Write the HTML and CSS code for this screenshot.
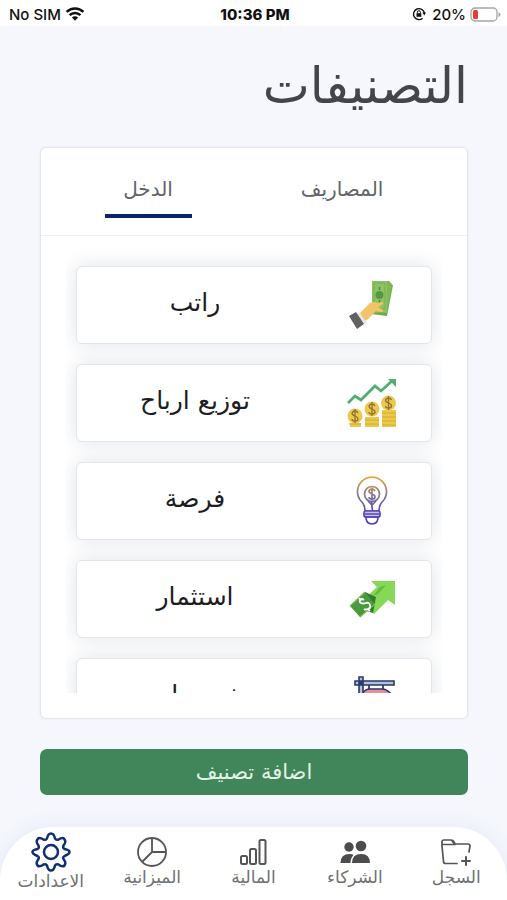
FILE: index.html
```html
<!DOCTYPE html>
<html lang="ar" dir="rtl">
<head>
<meta charset="utf-8">
<meta name="viewport" content="width=device-width, initial-scale=1">
<title>التصنيفات</title>
<link rel="stylesheet" href="styles.css">
</head>
<body>
<header class="status" dir="ltr">
  <div class="status-side">
    <span>No SIM</span>
    <svg width="20" height="16" viewBox="0 0 20 16" fill="none" stroke="#111" stroke-width="2.6"><path d="M1.6 5.9a12 12 0 0 1 16.8 0M4.6 9.2a7.6 7.6 0 0 1 10.8 0"/><path d="M6.9 11.6a4.4 4.4 0 0 1 6.2 0L10 14.8z" fill="#111" stroke="none"/></svg>
  </div>
  <strong class="status-time">10:36 PM</strong>
  <div class="status-side status-end">
    <svg width="14" height="14" viewBox="0 0 14 14" fill="none" stroke="#111" stroke-width="1.4"><path d="M10.6 11.3A5.5 5.5 0 1 1 12.4 6"/><path d="M10.4 5.6h3.6l-1.7 3z" fill="#111" stroke="none"/><path d="M5.4 6.5V5.2a1.5 1.5 0 0 1 3 0v1.3" stroke-width="1"/><path d="M4.5 6.2h4.8v3.6H4.5z" fill="#111" stroke="none"/></svg>
    <span class="percent">20%</span>
    <svg width="31" height="15" viewBox="0 0 31 15"><rect x="1" y="1" width="26" height="13" rx="4" fill="#fff" stroke="#a5a5a5" stroke-width="1.3"/><rect x="3" y="3" width="5" height="9" rx="1.5" fill="#eb3b30"/><path d="M28.5 5v5q2-1 2-2.500t-2-2.500z" fill="#a5a5a5"/></svg>
  </div>
</header>

<main class="content">
  <h1 class="title">التصنيفات</h1>

  <section class="card">
    <div class="tabs" role="tablist">
      <button class="tab" type="button" role="tab" aria-selected="false">المصاريف</button>
      <button class="tab active" type="button" role="tab" aria-selected="true">الدخل</button>
    </div>
    <ul class="list">
      <li class="item">
        <svg class="item-icon" width="50" height="50" viewBox="0 0 50 50">
          <path d="M31 2l15 3-6 31-16-2z" fill="#6faa4a"/><path d="M25 1h17l3 3-5 29H25z" fill="#80b858"/><path d="M25 1h15v31H25z" fill="#8bc463"/>
          <path d="M27 3h11v26H27z" fill="none" stroke="#75ae50"/><circle cx="32.500" cy="15" r="4" fill="#5a9546"/><path d="M32.500 7v3m0 10v3" stroke="#4f873f" stroke-width="1.500"/>
          <path d="M13 33l10-10q3-2 7 0l5-1q2 0 1 2l-5 3 5 3q1 2-2 2l-5-1-9 9-3 1z" fill="#f2c367"/>
          <path d="M10 34l2-2 8 11-3 1z" fill="#e6e6e4"/><path d="M2 36l7-4 8 12-7 5z" fill="#616161"/>
        </svg>
        <span class="item-name">راتب</span>
      </li>
      <li class="item">
        <svg class="item-icon" width="50" height="50" viewBox="0 0 50 50">
          <path d="M1 25l7-7 6 4L28 8l6 5 11-10" fill="none" stroke="#4fae70" stroke-width="2.800"/><path d="M41 1h8v8z" fill="#4fae70"/>
          <g fill="#edc949"><path d="M3 45h11v4H3zM18 39h14v10H18zM35 32h14v17H35z"/><circle cx="8" cy="38" r="7.500"/><circle cx="25" cy="31" r="7.500"/><circle cx="41.500" cy="25" r="7.500"/></g>
          <path d="M2 46h12M18 42h14M18 46h14M35 35h14M35 39h14M35 43h14M35 47h14" stroke="#d7aa32" fill="none"/>
          <path id="coin-sign" d="M11 35q-1-2-3-2t-3 2q0 2 3 3t3 3q0 2-3 2t-3-2M8 31v14" fill="none" stroke="#917039" stroke-width="1.300"/>
          <use href="#coin-sign" x="17" y="-7"/><use href="#coin-sign" x="33.500" y="-13"/>
        </svg>
        <span class="item-name">توزيع ارباح</span>
      </li>
      <li class="item">
        <svg class="item-icon" width="50" height="50" viewBox="0 0 50 50">
          <defs><linearGradient id="bulb" gradientUnits="userSpaceOnUse" x1="0" y1="1" x2="0" y2="48"><stop stop-color="#eda63c"/><stop offset=".4" stop-color="#83758f"/><stop offset=".75" stop-color="#5549bd"/><stop offset="1" stop-color="#463acb"/></linearGradient></defs>
          <g fill="none" stroke="url(#bulb)" stroke-width="1.700"><path d="M18 35q0-6-4-10a14.500 14.500 0 1 1 22 0q-4 4-4 10z"/><circle cx="25" cy="18" r="7.500"/><path d="M24.500 26l1 9M21 25l4 4 4-4"/><path d="M28 15q-1-2-3-2t-3 2q0 2 3 3t3 3q0 2-3 2t-3-2M25 11.500v13"/><rect x="17" y="35" width="16" height="6" rx="2" fill="#c9c4ed"/><path d="M18 38h14M19 41q0 7 6 7t6-7z"/></g>
        </svg>
        <span class="item-name">فرصة</span>
      </li>
      <li class="item">
        <svg class="item-icon" width="50" height="50" viewBox="0 0 50 50">
          <path d="M24 7h24v24l-7-5-14 14-12-13 15-14z" fill="#86d957"/><path d="M39 11l-8 9-5 2 7-9z" fill="#65bb40"/>
          <path d="M18 18l11 5-3 16-6-2z" fill="#317c2a"/><path d="M3 32l15-14 10 12-15 13z" fill="#4a993b"/><path d="M3 32l15-14M13 43l15-13" stroke="#76bd57" stroke-width="1.200"/>
          <path d="M17 26q-3-2-4 0t1 3 5 0 4 2-2 4-4 0M12 24l2 3m7 8l2 2" fill="none" stroke="#fff" stroke-width="1.800"/>
        </svg>
        <span class="item-name">استثمار</span>
      </li>
      <li class="item">
        <svg class="item-icon" width="50" height="50" viewBox="0 0 50 50">
          <path d="M15 22q3-5 8-5h12q5 0 9 5l4 15H12z" fill="#e98d9c" stroke="#293967" stroke-width="1.600"/><path d="M22 13v4m14-4v4" stroke="#293967" stroke-width="1.700"/>
          <path d="M8 9h39v4H8zM12 5h4v42h-4z" fill="#b4c0dc" stroke="#293967" stroke-width="1.600"/><circle cx="14" cy="11" r="2" fill="#293967"/>
        </svg>
        <span class="item-name">خصومات</span>
      </li>
    </ul>
  </section>

  <button class="add" type="button">اضافة تصنيف</button>
</main>

<nav class="nav">
  <a class="nav-link" href="#log">
    <svg width="32" height="32" viewBox="0 0 32 32" fill="none" stroke="#555" stroke-width="1.700" stroke-linejoin="round" stroke-linecap="round"><path d="M17 27.500H5.500q-2 0-2-2L2 10V6q0-2 2-2h7q2 0 3 2l1 2h13q2 0 2 2l-1 6M2.500 8.500H15L12 5"/><path d="M26 21v8m-4-4h8" stroke-width="2"/></svg>
    <span>السجل</span>
  </a>
  <a class="nav-link" href="#partners">
    <svg width="32" height="32" viewBox="0 0 32 32" fill="#4c4c4c"><circle cx="10" cy="11" r="4.700"/><circle cx="22" cy="10" r="5.300"/><path d="M1.500 27q0-9 9-9 3 0 4 1-3 3-3 8zM13 27q0-9 9-9t9 9z"/></svg>
    <span>الشركاء</span>
  </a>
  <a class="nav-link" href="#finance">
    <svg width="32" height="32" viewBox="0 0 32 32" fill="none" stroke="#555" stroke-width="2"><rect x="3" y="20" width="6" height="8" rx="1.500"/><rect x="12" y="13" width="6" height="15" rx="1.500"/><rect x="21.500" y="4" width="6" height="24" rx="1.500"/></svg>
    <span>المالية</span>
  </a>
  <a class="nav-link" href="#budget">
    <svg width="32" height="32" viewBox="0 0 32 32" fill="none" stroke="#555" stroke-width="1.800"><circle cx="16" cy="16" r="14"/><path d="M16 2v14h14M16 16L6 26"/></svg>
    <span>الميزانية</span>
  </a>
  <a class="nav-link current" href="#settings" aria-current="page">
    <svg width="40" height="40" viewBox="0 0 40 40" fill="none" stroke="#102f73" stroke-width="2.500" stroke-linejoin="round"><circle cx="20" cy="20" r="7"/><path d="M20 1.500q3 0 4 5 1 2 3.500 1 5-3 6 0 2 2-1 6-1 2.500 1 3.500 5 1 5 3t-5 4q-2 1-1 3 3 4 1 6.500-2 2-6-1-2.500-1-3.500 1-1 5-4 5t-4-5q-1-2-3.500-1-4 3-6 1-2-2.500 1-6.500 1-2-1-3-5-2-5-4t5-3q2-1 1-3.500-3-4-1-6 1-3 6 0 2.500 1 3.500-1 1-5 4-5z"/></svg>
    <span>الاعدادات</span>
  </a>
</nav>
</body>
</html>
```
FILE: styles.css
```css
* {
  box-sizing: border-box;
}

body {
  margin: 0;
  height: 100vh;
  min-height: 600px;
  display: flex;
  flex-direction: column;
  background: #f5f7fd;
  color: #55575b;
  font-family: "DejaVu Sans", sans-serif;
}

button {
  font: inherit;
  border: 0;
  cursor: pointer;
}

.status {
  display: grid;
  grid-template-columns: 1fr auto 1fr;
  align-items: center;
  height: 26px;
  padding: 2px 6px 0 9px;
  background: #fff;
  color: #111;
  font: 500 15px Inter, sans-serif;
}

.status-side {
  display: flex;
  align-items: center;
  gap: 4px;
}

.status-end {
  justify-content: flex-end;
}

.status-time {
  font-weight: 800;
}

.percent {
  margin-left: 2px;
}

.content {
  flex: 1;
  min-height: 0;
  display: flex;
  flex-direction: column;
  padding: 24px 39px 32px 40px;
}

.title {
  margin: 0 0 25px;
  color: #444549;
  font-size: 50px;
  font-weight: 400;
  line-height: 72px;
}

.card {
  flex: 1;
  min-height: 0;
  display: flex;
  flex-direction: column;
  padding-bottom: 25px;
  background: #fff;
  border: 1px solid #e4e6ee;
  border-radius: 6px;
  box-shadow: 0 0 3px #e7e9f2;
}

.tabs {
  display: grid;
  grid-template-columns: 1fr 1fr;
  justify-items: center;
  padding: 16px 28px 17px 10px;
  border-bottom: 1px solid #eff0f3;
}

.tab {
  min-width: 87px;
  height: 54px;
  padding: 0;
  background: none;
  border-bottom: 4px solid transparent;
  color: #626468;
  font-size: 20px;
}

.tab.active {
  border-bottom-color: #08246a;
}

.list {
  flex: 1;
  min-height: 0;
  overflow: hidden;
  display: flex;
  flex-direction: column;
  gap: 20px;
  margin: 10px 25px 0;
  padding: 20px 10px 0;
  list-style: none;
}

.item {
  flex: none;
  display: grid;
  grid-template-columns: 1fr 2fr;
  place-items: center;
  height: 78px;
  background: #fff;
  border: 1px solid #e2e5e9;
  border-radius: 6px;
  box-shadow: 0 0 20px 1px #e3e6eb;
}

.item-name {
  padding-bottom: 4px;
  color: #1d1d1f;
  font-size: 25px;
  line-height: 40px;
}

.add {
  flex: none;
  height: 46px;
  margin-top: 30px;
  background: #41865a;
  border-radius: 7px;
  color: #e2f4e6;
  font-size: 21px;
}

.nav {
  flex: none;
  display: grid;
  grid-template-columns: repeat(5, 1fr);
  height: 73px;
  background: #fff;
  border-radius: 54px 54px 0 0;
  box-shadow: 0 0 20px #e5e8f5;
}

.nav-link {
  display: flex;
  flex-direction: column;
  align-items: center;
  padding-top: 9px;
  color: #6f7174;
  font-size: 17px;
  line-height: 18px;
  text-decoration: none;
}

.nav-link.current {
  padding-top: 5px;
}
```
